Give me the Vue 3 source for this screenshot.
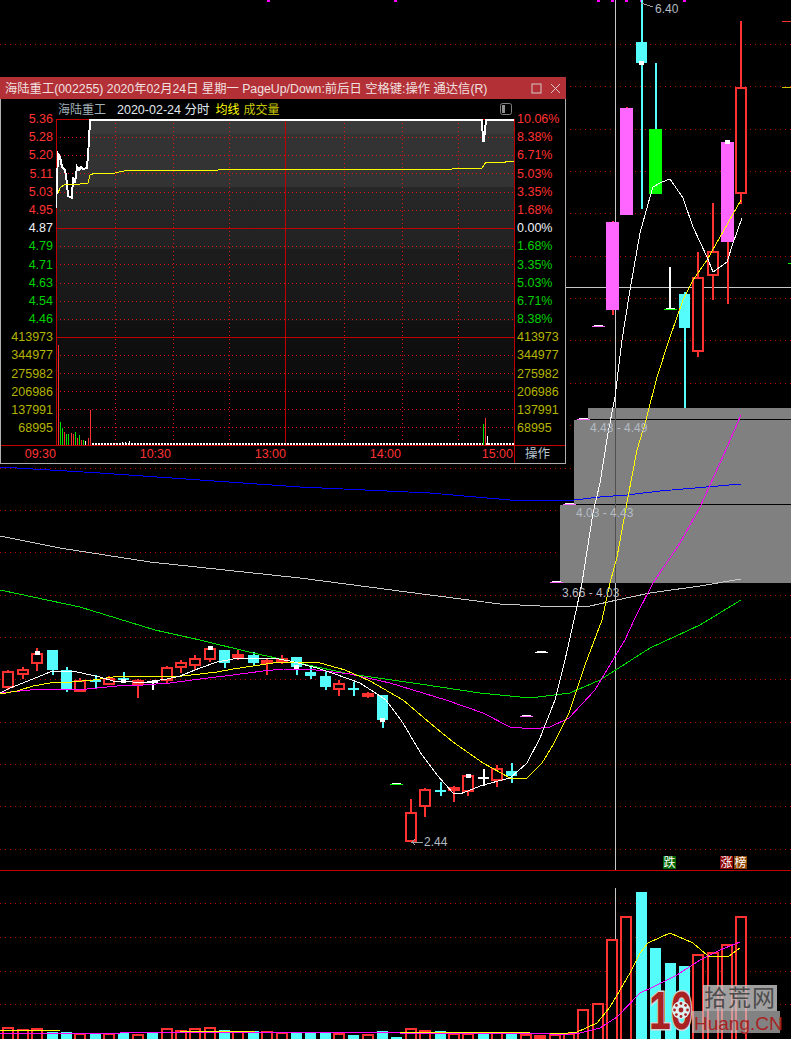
<template>
  <div class="screen">
    <!-- 日K主图 + 成交量副图 -->
    <svg class="kline" width="791" height="1039" viewBox="0 0 791 1039" shape-rendering="crispEdges">
      <line v-for="y in gridY" :key="'g' + y" x1="0" x2="791" :y1="y" :y2="y" class="dot-line" />
      <rect v-for="x in topMarks" :key="'m' + x" :x="x - 1" y="0" width="3" height="2" fill="#ff00ff" />

      <rect x="782" y="21" width="9" height="1" fill="#ff3232" />
      <rect x="782" y="87" width="9" height="1" fill="#c8c800" />
      <rect x="788" y="263" width="3" height="1" fill="#00ff00" />

      <!-- 筹码区间 -->
      <rect x="588" y="408" width="203" height="11" fill="#808080" />
      <rect x="574" y="420" width="217" height="84" fill="#808080" />
      <rect x="560" y="505" width="231" height="78" fill="#808080" />

      <!-- 十字线 -->
      <line x1="615.5" x2="615.5" y1="0" y2="408" stroke="#c8c8c8" />
      <line x1="615.5" x2="615.5" y1="408" y2="583" stroke="#505050" />
      <line x1="615.5" x2="615.5" y1="583" y2="870" stroke="#c8c8c8" />
      <line x1="615.5" x2="615.5" y1="888" y2="940" stroke="#c8c8c8" />
      <line x1="565" x2="791" y1="287.5" y2="287.5" stroke="#c8c8c8" />

      <!-- K线 -->
      <g v-for="(c, i) in candles" :key="'c' + i">
        <rect :x="(c.x0 + c.x1) / 2 - 1" :y="c.hi" width="2" :height="c.lo - c.hi" :fill="wickColor(c)" />
        <rect
          v-if="c.kind === 'hollow'"
          :x="c.x0 + 1" :y="c.top + 1" :width="c.x1 - c.x0 - 2" :height="c.bot - c.top - 2"
          fill="#000" stroke="#ff3232" stroke-width="2"
        />
        <rect
          v-else
          :x="c.x0" :y="c.top" :width="c.x1 - c.x0" :height="c.bot - c.top"
          :fill="colors[c.kind]"
        />
        <rect v-if="c.dot" :x="(c.x0 + c.x1) / 2 - 2.5" :y="c.dot" width="5" height="4" fill="#fff" />
      </g>

      <!-- 停牌/一字板的短横 -->
      <g v-for="d in dashes" :key="'d' + d.x">
        <rect :x="d.x - 6" :y="d.y" width="13" height="1" :fill="d.color" />
        <rect :x="d.x - 4" :y="d.y - 1" width="9" height="1" fill="#fff" />
      </g>

      <!-- 均线 -->
      <polyline :points="lines.ma250" class="curve" stroke="#c8c8c8" />
      <polyline :points="lines.ma120" class="curve" stroke="#0000ff" />
      <polyline :points="lines.ma60" class="curve" stroke="#00e000" />
      <polyline :points="lines.ma20" class="curve" stroke="#ff00ff" />
      <polyline :points="lines.ma10" class="curve" stroke="#ffff00" />
      <polyline :points="lines.ma5" class="curve" stroke="#fff" />

      <text x="590" y="432" class="chip-text">4.43 - 4.49</text>
      <text x="576" y="517" class="chip-text">4.03 - 4.43</text>
      <text x="562" y="597" class="chip-text">3.66 - 4.03</text>

      <polyline points="641,3 653,7" class="curve" stroke="#a0a0a0" />
      <text x="655" y="13" class="chip-text">6.40</text>
      <polyline points="415,839 412,842 423,842 412,842 415,845" class="curve" stroke="#a0a0a0" />
      <text x="424" y="846" class="chip-text">2.44</text>

      <!-- 信号标记 -->
      <rect x="663" y="856" width="13" height="13" fill="#006400" />
      <text x="669.5" y="867" class="badge-text">跌</text>
      <rect x="720" y="856" width="13" height="13" fill="#8b0000" />
      <text x="726.5" y="867" class="badge-text">涨</text>
      <rect x="734" y="856" width="13" height="13" fill="#8b4500" />
      <text x="740.5" y="867" class="badge-text">榜</text>

      <line x1="0" x2="791" y1="870.5" y2="870.5" stroke="#c00000" />

      <!-- 成交量 -->
      <g v-for="(b, i) in volumes" :key="'v' + i">
        <rect
          v-if="b.kind === 'hollow'"
          :x="b.x0 + 1" :y="b.top + 1" :width="b.x1 - b.x0 - 2" :height="1045 - b.top"
          fill="#000" stroke="#ff3232" stroke-width="2"
        />
        <rect v-else :x="b.x0" :y="b.top" :width="b.x1 - b.x0" :height="1045 - b.top" :fill="colors[b.kind]" />
      </g>
      <polyline :points="lines.volMa5" class="curve" stroke="#ffff00" />
      <polyline :points="lines.volMa10" class="curve" stroke="#ff00ff" />

      <!-- 水印 -->
      <g class="mark" shape-rendering="auto">
        <rect x="703" y="985" width="74" height="26" fill="#c8c8c8" fill-opacity="0.8" />
        <rect x="692" y="1011" width="88" height="22" fill="#c8c8c8" fill-opacity="0.65" />
        <text transform="translate(649 1029) scale(0.74 1)" class="mark-ten">10</text>
        <circle cx="681" cy="1010" r="9" fill="#dcf0f0" />
        <circle cx="681" cy="1010" r="2.4" fill="#a82222" />
        <circle v-for="p in gearDots" :key="p.k" :cx="p.x" :cy="p.y" r="1.4" fill="#a82222" />
        <text x="704" y="1006" class="mark-cn">拾荒网</text>
        <text x="694" y="1030" class="mark-en">Huang.CN</text>
      </g>
    </svg>

    <!-- 分时小窗 -->
    <div class="win">
      <div class="win-title">
        <span>海陆重工(002255) 2020年02月24日 星期一 PageUp/Down:前后日 空格键:操作 通达信(R)</span>
        <div class="win-btns">
          <svg width="11" height="11" viewBox="0 0 11 11"><rect x="1" y="1" width="9" height="9" fill="none" stroke="#d8c8c8" /></svg>
          <svg width="11" height="11" viewBox="0 0 11 11"><path d="M1 1l9 9M10 1l-9 9" stroke="#d8c8c8" fill="none" /></svg>
        </div>
      </div>
      <div class="win-body">
        <div class="win-head">
          <span class="head-name">海陆重工</span>
          <span class="head-date">2020-02-24 分时</span>
          <span class="head-avg">均线</span>
          <span class="head-vol">成交量</span>
          <svg class="head-icon" width="12" height="12" viewBox="0 0 12 12">
            <rect x="0.5" y="0.5" width="11" height="11" rx="2" fill="none" stroke="#808080" />
            <rect x="2" y="2" width="3" height="8" fill="#909090" />
          </svg>
        </div>
        <div class="win-grid">
          <div class="axis axis-left">
            <div v-for="r in leftAxis" :key="r.t" class="axis-row" :class="r.c">{{ r.t }}</div>
          </div>
          <svg class="mini" width="459" height="327" viewBox="56 118 459 327" shape-rendering="crispEdges">
            <defs>
              <linearGradient id="miniBand" gradientUnits="userSpaceOnUse" x1="0" x2="0" y1="119" y2="445">
                <stop offset="0" stop-color="#3a3a3a" />
                <stop offset="0.045" stop-color="#3a3a3a" />
                <stop offset="0.045" stop-color="#333" />
                <stop offset="0.21" stop-color="#333" />
                <stop offset="0.21" stop-color="#272727" />
                <stop offset="0.4" stop-color="#222" />
                <stop offset="0.4" stop-color="#1c1c1c" />
                <stop offset="0.62" stop-color="#171717" />
                <stop offset="0.62" stop-color="#111" />
                <stop offset="0.8" stop-color="#0c0c0c" />
                <stop offset="0.8" stop-color="#070707" />
                <stop offset="1" stop-color="#000" />
              </linearGradient>
            </defs>
            <polygon :points="miniArea" fill="url(#miniBand)" />
            <line v-for="y in miniY" :key="'y' + y" x1="56" x2="514" :y1="y" :y2="y" class="mini-dot" />
            <line v-for="x in miniX" :key="'x' + x" :x1="x" :x2="x" y1="119" y2="445" class="mini-dot" shape-rendering="auto" />
            <line x1="56" x2="514" y1="119.5" y2="119.5" stroke="#c00000" />
            <line x1="56" x2="514" y1="228.5" y2="228.5" stroke="#c00000" />
            <line x1="56" x2="514" y1="337.5" y2="337.5" stroke="#c00000" />
            <rect x="56" y="119" width="1" height="326" fill="#c00000" />
            <rect x="285" y="119" width="1" height="326" fill="#c00000" />
            <rect x="514" y="119" width="1" height="326" fill="#c00000" />
            <line x1="92" x2="514" y1="444" y2="444" stroke="#fff" stroke-width="2" stroke-dasharray="2 1" />
            <rect v-for="b in miniBars" :key="b.x" :x="b.x" :y="b.y" width="1" :height="445 - b.y" :fill="b.c" />
            <polyline :points="miniPrice" fill="none" stroke="#fff" stroke-width="2" />
            <polyline :points="miniAvg" fill="none" stroke="#ffff00" />
          </svg>
          <div class="axis axis-right">
            <div v-for="r in rightAxis" :key="r.k" class="axis-row" :class="r.c">{{ r.t }}</div>
          </div>
        </div>
        <div class="win-times">
          <span v-for="t in times" :key="t">{{ t }}</span>
          <span class="times-op">操作</span>
        </div>
      </div>
    </div>
  </div>
</template>

<script setup>
const colors = { cyan: '#54fcfc', red: '#ff3232', magenta: '#ff66ff', green: '#00ff00', white: '#fff' }

// 主图虚线，间距约 42.35
const gridY = []
for (let i = 0; i < 20; i++) gridY.push(Math.round(44 + i * 42.35) + 0.5)
gridY.push(903.5, 937.5, 971.5, 1004.5)

const topMarks = [268, 395, 598, 612, 626, 641, 684]

// x0/x1 实体左右，top/bot 实体上下，hi/lo 影线
const c = (x0, x1, top, bot, hi, lo, kind, extra = {}) => ({ x0, x1, top, bot, hi, lo, kind, ...extra })
const candles = [
  c(2, 14, 671, 688, 670, 690, 'hollow'),
  c(17, 29, 669, 675, 667, 679, 'hollow'),
  c(31, 43, 653, 664, 648, 671, 'hollow', { dot: 651 }),
  c(47, 58, 650, 670, 650, 675, 'cyan'),
  c(61, 72, 670, 689, 667, 692, 'cyan'),
  c(74, 86, 680, 692, 678, 692, 'hollow'),
  c(90, 101, 680, 682, 675, 688, 'cyan'),
  c(103, 115, 678, 685, 676, 685, 'hollow'),
  c(118, 129, 678, 680, 672, 683, 'cyan', { dot: 679 }),
  c(132, 144, 680, 685, 679, 698, 'hollow'),
  c(147, 158, 681, 683, 680, 690, 'white'),
  c(161, 173, 667, 681, 666, 683, 'hollow'),
  c(175, 187, 662, 668, 660, 673, 'hollow'),
  c(189, 201, 658, 666, 655, 670, 'hollow'),
  c(204, 216, 648, 660, 646, 662, 'hollow', { dot: 646 }),
  c(219, 230, 650, 663, 650, 668, 'cyan'),
  c(232, 244, 654, 658, 650, 660, 'red'),
  c(248, 259, 655, 663, 652, 666, 'cyan'),
  c(261, 273, 660, 664, 658, 675, 'red'),
  c(276, 288, 658, 662, 655, 664, 'red'),
  c(291, 302, 657, 667, 657, 675, 'cyan', { dot: 665 }),
  c(305, 316, 672, 676, 665, 679, 'cyan'),
  c(320, 331, 676, 687, 672, 690, 'cyan'),
  c(333, 345, 683, 690, 680, 696, 'hollow'),
  c(348, 359, 688, 690, 682, 696, 'cyan'),
  c(362, 374, 693, 697, 692, 698, 'red'),
  c(377, 388, 695, 720, 695, 728, 'cyan', { dot: 718 }),
  c(405, 417, 812, 842, 799, 842, 'hollow'),
  c(419, 431, 789, 807, 788, 817, 'hollow'),
  c(435, 446, 790, 792, 782, 796, 'cyan'),
  c(448, 460, 787, 791, 786, 802, 'red'),
  c(462, 474, 775, 792, 775, 796, 'hollow', { dot: 774 }),
  c(478, 489, 777, 779, 769, 786, 'white'),
  c(491, 503, 768, 781, 765, 787, 'hollow'),
  c(506, 517, 771, 776, 763, 783, 'cyan'),
  c(606, 619, 222, 310, 221, 315, 'magenta'),
  c(620, 633, 108, 215, 107, 215, 'magenta'),
  c(636, 647, 42, 63, 0, 209, 'cyan', { dot: 61 }),
  c(649, 662, 129, 194, 63, 194, 'green'),
  c(679, 690, 294, 328, 292, 408, 'cyan'),
  c(692, 704, 277, 352, 252, 357, 'hollow'),
  c(707, 719, 251, 276, 203, 300, 'hollow'),
  c(721, 734, 142, 242, 142, 304, 'magenta', { dot: 140 }),
  c(735, 747, 87, 194, 21, 204, 'hollow')
]

function wickColor(item) {
  if (item.kind === 'hollow' || item.kind === 'red' || item.kind === 'magenta') return '#ff3232'
  if (item.kind === 'green') return colors.cyan
  return colors[item.kind]
}

const dashes = [
  { x: 396, y: 784, color: '#00ff00' },
  { x: 526, y: 716, color: '#ff66ff' },
  { x: 541, y: 652, color: '#ffffff' },
  { x: 556, y: 582, color: '#ff66ff' },
  { x: 569, y: 504, color: '#ff66ff' },
  { x: 583, y: 419, color: '#ff66ff' },
  { x: 598, y: 326, color: '#ff66ff' },
  { x: 670, y: 309, color: '#00ff00' }
]
// 十字星的白色上影
candles.push(c(669, 671, 267, 308, 267, 308, 'white'))

const v = (x0, x1, top, kind) => ({ x0, x1, top, kind })
const H = 'hollow'
const C = 'cyan'
const volumes = [
  v(2, 14, 1027, H), v(17, 29, 1029, H), v(31, 43, 1028, H), v(47, 58, 1032, C), v(61, 72, 1032, C),
  v(74, 86, 1033, H), v(90, 101, 1034, C), v(103, 115, 1033, H), v(118, 129, 1033, C), v(132, 144, 1034, H),
  v(147, 158, 1033, C), v(161, 173, 1028, H), v(175, 187, 1030, H), v(189, 201, 1028, H), v(204, 216, 1027, H),
  v(219, 230, 1030, C), v(232, 244, 1031, H), v(248, 259, 1031, C), v(261, 273, 1031, H), v(276, 288, 1032, H),
  v(291, 302, 1032, C), v(305, 316, 1032, C), v(320, 331, 1032, C), v(333, 345, 1033, H), v(348, 359, 1035, C),
  v(362, 374, 1034, H), v(377, 388, 1031, C), v(391, 402, 1037, C), v(405, 417, 1028, H), v(419, 431, 1030, H),
  v(435, 446, 1031, C), v(448, 460, 1033, H), v(462, 474, 1033, H), v(478, 489, 1033, C), v(491, 503, 1032, H),
  v(506, 517, 1033, C), v(520, 532, 1034, H), v(534, 546, 1035, 'red'), v(549, 561, 1034, H), v(563, 575, 1033, H),
  v(577, 589, 1009, H), v(592, 604, 1003, H), v(606, 618, 939, H), v(620, 632, 916, H), v(636, 647, 892, C),
  v(650, 661, 948, C), v(665, 676, 963, C), v(679, 690, 966, C), v(692, 704, 954, H), v(707, 719, 952, H),
  v(721, 733, 944, H), v(735, 747, 916, H)
]

const lines = {
  ma5: '0,693 10,688 33,679 50,672 60,671 77,672 100,677 113,681 133,682 147,682 167,679 180,676 200,668 217,662 233,659 253,658 273,658 290,661 317,668 335,674 360,683 377,694 386,700 403,723 420,752 437,775 453,793 460,794 483,785 510,778 527,763 540,738 555,700 565,660 574,620 582,583 593,513 600,483 608,433 615,397 622,340 630,290 640,233 650,197 653,187 662,182 670,179 683,198 693,227 707,257 713,272 727,262 733,243 742,218',
  ma10: '0,694 17,691 33,686 50,683 72,682 93,680 113,677 143,676 173,677 200,674 217,672 233,669 253,666 273,663 300,662 320,663 345,670 370,681 403,700 430,723 453,742 483,763 510,778 527,778 542,763 553,745 569,713 585,665 602,620 610,583 617,557 628,497 637,450 646,420 657,377 670,337 683,300 693,280 707,260 720,237 741,200',
  ma20: '0,693 30,690 60,689 87,689 117,686 143,685 170,683 200,679 233,675 263,671 283,669 316,670 350,674 390,683 446,700 483,713 510,727 533,729 550,727 569,718 595,690 610,665 625,640 634,620 653,583 680,543 700,507 720,463 741,415',
  ma60: '0,590 80,607 155,630 200,640 253,653 290,661 317,667 350,674 420,684 480,693 530,698 570,693 600,680 650,648 700,625 741,600',
  ma120: '0,467 100,473 300,487 430,493 510,500 574,500 600,497 627,495 660,491 741,484',
  ma250: '0,536 60,548 150,562 300,578 430,595 500,604 540,606 590,606 617,600 650,593 700,586 741,579',
  volMa5: '0,1030 60,1031 180,1031 330,1033 500,1032 560,1034 577,1032 597,1023 610,1007 620,990 630,973 640,953 648,943 670,933 693,943 708,956 728,957 740,948',
  volMa10: '0,1033 120,1033 300,1032 400,1033 540,1033 560,1035 580,1033 600,1028 617,1017 640,993 653,987 677,975 700,960 720,950 740,942'
}

const gearDots = []
for (let i = 0; i < 8; i++) {
  const a = (i * Math.PI) / 4
  gearDots.push({ k: i, x: 681 + Math.cos(a) * 6.5, y: 1010 + Math.sin(a) * 6.5 })
}

// 分时小窗数据
const red = 'up'
const green = 'down'
const vol = 'vol'
const prices = ['5.36', '5.28', '5.20', '5.11', '5.03', '4.95']
const lows = ['4.79', '4.71', '4.63', '4.54', '4.46']
const vols = ['413973', '344977', '275982', '206986', '137991', '68995']
const pcts = ['10.06%', '8.38%', '6.71%', '5.03%', '3.35%', '1.68%']
const pctsDown = ['1.68%', '3.35%', '5.03%', '6.71%', '8.38%']

const leftAxis = [
  ...prices.map((t) => ({ t, c: red })),
  { t: '4.87', c: 'flat' },
  ...lows.map((t) => ({ t, c: green })),
  ...vols.map((t) => ({ t, c: vol }))
]
const rightAxis = [
  ...pcts.map((t) => ({ t, k: 'u' + t, c: red })),
  { t: '0.00%', k: 'z', c: 'flat' },
  ...pctsDown.map((t) => ({ t, k: 'd' + t, c: green })),
  ...vols.map((t) => ({ t, k: 'v' + t, c: vol }))
]

const miniY = [137.5, 155.5, 173.5, 192.5, 210.5, 246.5, 264.5, 283.5, 301.5, 319.5, 355.5, 373.5, 391.5, 409.5, 427.5]
const miniX = [115.5, 173.5, 229.5, 344.5, 402.5, 458.5]

const priceLine = '56,208 57,182 58,154 60,157 62,167 65,170 67,183 68,196 72,198 73,177 75,183 77,167 79,170 81,167 83,169 87,168 89,141 90,120 482,120 483,141 484,141 485,130 486,120 514,120'
const miniPrice = priceLine
const miniArea = priceLine + ' 514,445 56,445'
const miniAvg = '58,193 60,188 65,184 72,185 88,183 90,175 95,173 115,173 128,170 218,170 220,169 452,169 482,168 486,162 505,162 505,161 514,161'

const miniBars = [
  { x: 58, y: 345, c: '#ff3232' }, { x: 60, y: 422, c: '#00e000' }, { x: 62, y: 428, c: '#00e000' },
  { x: 64, y: 432, c: '#ff3232' }, { x: 66, y: 434, c: '#00e000' }, { x: 68, y: 434, c: '#00e000' },
  { x: 71, y: 433, c: '#ff3232' }, { x: 73, y: 434, c: '#ff3232' }, { x: 75, y: 432, c: '#00e000' },
  { x: 77, y: 438, c: '#ff3232' }, { x: 79, y: 435, c: '#00e000' }, { x: 81, y: 440, c: '#ff3232' },
  { x: 83, y: 440, c: '#00e000' }, { x: 85, y: 441, c: '#fff' }, { x: 88, y: 438, c: '#ff3232' },
  { x: 90, y: 410, c: '#ff3232' }, { x: 122, y: 442, c: '#fff' }, { x: 125, y: 442, c: '#fff' },
  { x: 129, y: 441, c: '#fff' }, { x: 483, y: 424, c: '#00e000' }, { x: 485, y: 418, c: '#ff3232' },
  { x: 487, y: 436, c: '#fff' }
]

const times = ['09:30', '10:30', '13:00', '14:00', '15:00']
</script>

<style scoped>
.screen {
  position: relative;
  width: 791px;
  height: 1039px;
  background: #000;
  overflow: hidden;
  font-family: "Liberation Sans", "Noto Sans CJK SC", sans-serif;
}
.kline {
  display: block;
}
.dot-line {
  stroke: #c00000;
  stroke-dasharray: 1 4;
}
.curve {
  fill: none;
  stroke-width: 1;
}
.chip-text {
  font-size: 12px;
  fill: #b4bcc4;
}
.badge-text {
  font-size: 12px;
  fill: #fff;
  text-anchor: middle;
}
.mark-ten {
  font-size: 53px;
  font-weight: bold;
  fill: #a82222;
  stroke: #d4d4d4;
  stroke-width: 3px;
  paint-order: stroke;
}
.mark-cn {
  font-size: 23px;
  fill: #4c4c4c;
  letter-spacing: 1px;
}
.mark-en {
  font-size: 19px;
  fill: #a82222;
}

.win {
  position: absolute;
  left: 0;
  top: 77px;
  width: 566px;
  background: #000;
}
.win-title {
  display: flex;
  align-items: center;
  justify-content: space-between;
  height: 22px;
  padding: 0 5px;
  box-sizing: border-box;
  background: #b33036;
  color: #f0e0e0;
  font-size: 12.3px;
  white-space: nowrap;
}
.win-btns {
  display: flex;
  gap: 8px;
}
.win-btns svg {
  display: block;
}
.win-body {
  border: 1px solid #b0b0b0;
  border-top: 0;
  height: 364px;
  box-sizing: content-box;
}
.win-head {
  display: flex;
  align-items: center;
  height: 19px;
  padding-left: 57px;
  font-size: 12px;
  white-space: nowrap;
}
.head-name {
  color: #a0b0b8;
  margin-right: 11px;
}
.head-date {
  color: #e0e8f0;
  margin-right: 6px;
  font-size: 12.5px;
}
.head-avg {
  color: #ffff00;
  margin-right: 4px;
}
.head-vol {
  color: #c8c800;
}
.head-icon {
  margin-left: auto;
  margin-right: 53px;
}
.win-grid {
  display: grid;
  grid-template-columns: 55px 459px 1fr;
  height: 327px;
}
.mini {
  display: block;
}
.mini-dot {
  stroke: #e01010;
  stroke-dasharray: 1 3;
}
.axis {
  margin-top: -8px;
  font-size: 12.5px;
}
.axis-row {
  height: 18.2px;
  line-height: 18.2px;
}
.axis-left {
  padding-right: 3px;
  text-align: right;
}
.axis-right {
  padding-left: 2px;
}
.up {
  color: #ff3232;
}
.down {
  color: #00d000;
}
.flat {
  color: #f0f4f8;
}
.vol {
  color: #b4b400;
}
.win-times {
  display: grid;
  grid-template-columns: 55px repeat(3, 115px) 114px 1fr;
  height: 18px;
  box-sizing: border-box;
  border-top: 1px solid #c00000;
  color: #ff3232;
  font-size: 12.5px;
  line-height: 16px;
  text-align: right;
}
.win-times span:nth-child(5) {
  border-right: 1px solid #c00000;
  padding-right: 1px;
}
.times-op {
  color: #b8c4d0;
  text-align: left;
  padding-left: 10px;
}
</style>

<style>
body {
  background: #000;
}
</style>
